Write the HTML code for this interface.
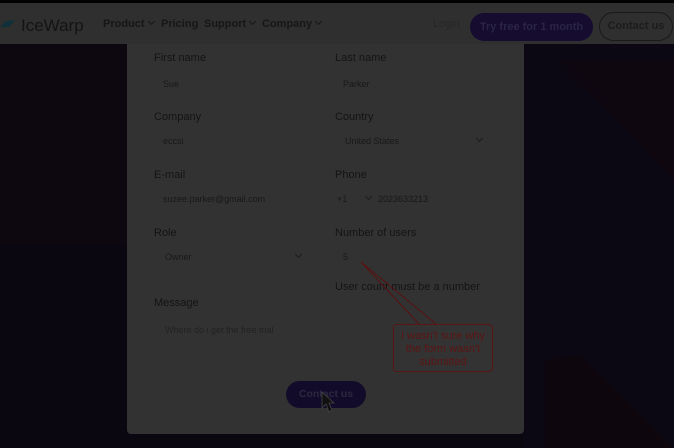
<!DOCTYPE html>
<html><head><meta charset="utf-8"><style>
*{margin:0;padding:0;box-sizing:border-box}
body{width:674px;height:448px;overflow:hidden;background:#0b0710;font-family:"Liberation Sans",sans-serif;position:relative}
.top{position:absolute;left:0;top:0;width:674px;height:3px;background:#000}
.hdr{position:absolute;left:0;top:3px;width:674px;height:41px;background:#2f2f2f}
.t{position:absolute;white-space:nowrap}
.nav{color:#161616;font-size:11px;font-weight:bold;top:15px}
.nv{display:inline-block;width:5px;height:5px;border-right:1px solid #161616;border-bottom:1px solid #161616;transform:rotate(45deg);margin-left:4px;position:relative;top:-3px}
.panel{position:absolute;left:127px;top:44px;width:397px;height:390px;background:#323232;border-radius:0 0 4px 4px}
.lbl{position:absolute;color:#141414;font-size:11px;white-space:nowrap}
.val{position:absolute;color:#181818;font-size:9px;white-space:nowrap}
.ph{color:#222}
.chev{position:absolute;width:5px;height:5px;border-right:1px solid #1c1c1c;border-bottom:1px solid #1c1c1c;transform:rotate(45deg)}
</style></head><body>
<svg style="position:absolute;left:0;top:0" width="674" height="448">
 <rect x="0" y="44" width="127" height="200" fill="#0d0710"/>
 <rect x="524" y="44" width="150" height="404" fill="#0c0813"/>
 <polygon points="560,60 674,60 674,180" fill="#0e070f"/>
 <polygon points="545,360 580,355 674,448 545,448" fill="#0e060d"/>
</svg>
<div class="top"></div>
<div class="hdr">
 <svg style="position:absolute;left:0;top:16px" width="16" height="10"><path d="M0 8 L6 2 L15 1 L9 8 Z" fill="#10303a"/></svg>
 <div class="t" style="left:21px;top:13px;font-size:17px;color:#141414">IceWarp</div>
 <div class="t nav" style="left:103px">Product<span class="nv"></span></div>
 <div class="t nav" style="left:161px">Pricing</div>
 <div class="t nav" style="left:204px">Support<span class="nv"></span></div>
 <div class="t nav" style="left:262px">Company<span class="nv"></span></div>
 <div class="t" style="left:433px;top:15px;font-size:11px;color:#262626">Login</div>
 <div class="t" style="left:470px;top:10px;width:123px;height:28px;border-radius:14px;background:#150c30;color:#2a2446;font-size:11px;font-weight:bold;text-align:center;line-height:28px">Try free for 1 month</div>
 <div class="t" style="left:599px;top:9px;width:74px;height:29px;border-radius:15px;border:1px solid #1a1a1a;color:#1c1c1c;font-size:11px;font-weight:bold;text-align:center;line-height:27px">Contact us</div>
</div>
<div class="panel">
 <div class="lbl" style="left:27px;top:8px">First name</div>
 <div class="lbl" style="left:208px;top:8px">Last name</div>
 <div class="val" style="left:36px;top:35px">Sue</div>
 <div class="val" style="left:216px;top:35px">Parker</div>
 <div class="lbl" style="left:27px;top:67px">Company</div>
 <div class="lbl" style="left:208px;top:67px">Country</div>
 <div class="val" style="left:36px;top:92px">eccsi</div>
 <div class="val" style="left:218px;top:92px">United States</div>
 <div class="chev" style="left:350px;top:92px"></div>
 <div class="lbl" style="left:27px;top:125px">E-mail</div>
 <div class="lbl" style="left:208px;top:125px">Phone</div>
 <div class="val" style="left:36px;top:150px">suzee.parker@gmail.com</div>
 <div class="val" style="left:210px;top:150px">+1</div>
 <div class="chev" style="left:239px;top:150px"></div>
 <div class="val" style="left:251px;top:150px">2023633213</div>
 <div class="lbl" style="left:27px;top:183px">Role</div>
 <div class="lbl" style="left:208px;top:183px">Number of users</div>
 <div class="val" style="left:38px;top:208px">Owner</div>
 <div class="chev" style="left:169px;top:208px"></div>
 <div class="val" style="left:216px;top:208px">5</div>
 <div class="lbl" style="left:208px;top:237px">User count must be a number</div>
 <div class="lbl" style="left:27px;top:253px">Message</div>
 <div class="val ph" style="left:38px;top:281px">Where do i get the free trial</div>
 <div class="t" style="left:159px;top:337px;width:80px;height:27px;border-radius:14px;background:#130b2a;color:#2d2840;font-size:10.5px;font-weight:bold;text-align:center;line-height:27px">Contact us</div>
</div>
<svg style="position:absolute;left:0;top:0" width="674" height="448">
 <path d="M361 262 L419 324 M361 262 L436 324" stroke="#5a1010" stroke-width="1" fill="none"/>
 <rect x="393.5" y="324.5" width="99" height="47" rx="3" fill="#333" stroke="#5a1414"/>
 <text x="443" y="339" text-anchor="middle" font-family="Liberation Sans" font-size="11" fill="#5c1414">I wasn't sure why</text>
 <text x="443" y="352" text-anchor="middle" font-family="Liberation Sans" font-size="11" fill="#5c1414">the form wasn't</text>
 <text x="443" y="365" text-anchor="middle" font-family="Liberation Sans" font-size="11" fill="#5c1414">submitted</text>
 <path d="M322 392 L322 408 L326 404 L329 412 L332 410 L329 403 L334 403 Z" fill="#111" stroke="#444" stroke-width="0.8"/>
</svg>
</body></html>
